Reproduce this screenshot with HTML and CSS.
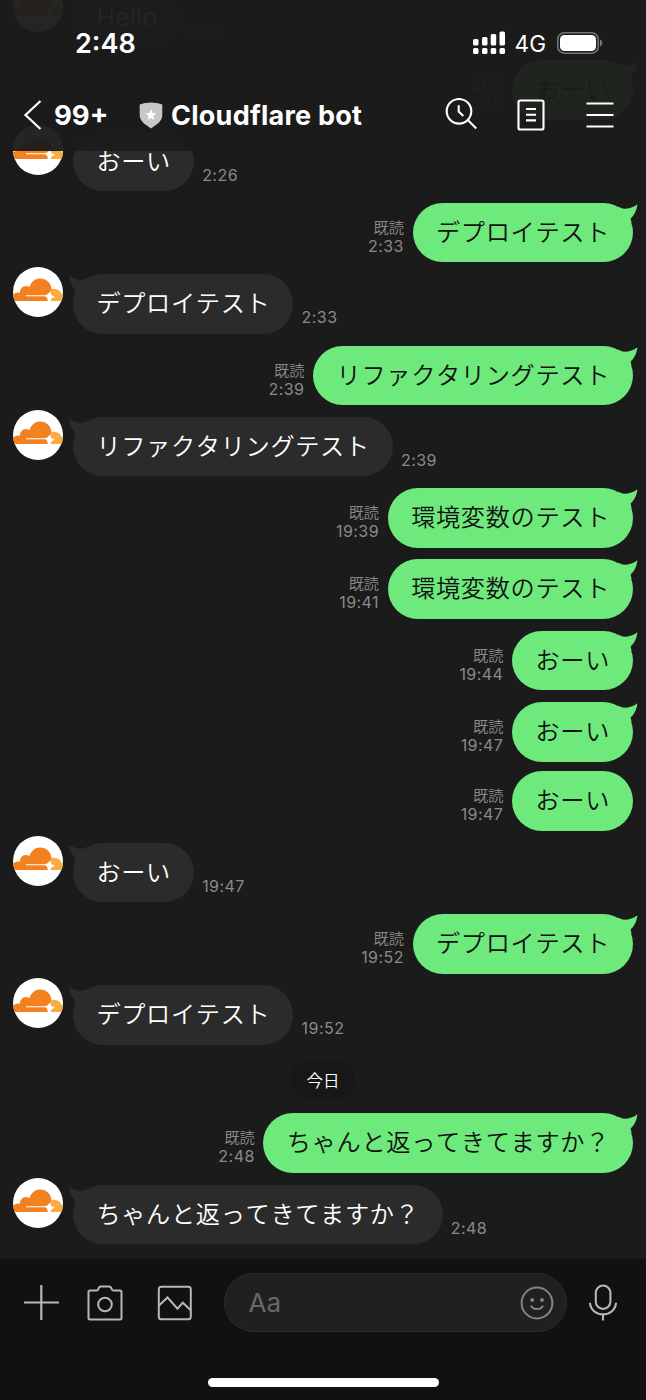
FILE: index.html
```html
<!DOCTYPE html>
<html lang="ja">
<head>
<meta charset="utf-8">
<title>Cloudflare bot</title>
<link rel="stylesheet" href="styles.css">
</head>
<body>
<svg class="defs" aria-hidden="true">
  <symbol id="logo" viewBox="0 0 50 50">
    <circle cx="25" cy="25" r="25" fill="#fff"/>
    <path d="M1.800 34C.5 31 0 28 .5 27.500C2 25.700 4.500 25.300 7 25.500C6.500 20.500 12 17 16.500 20C18.500 14.500 22 11.500 27 11.500C33.500 11.500 38 16 38.500 22L37 27L35 34Z" fill="#f48120"/>
    <path d="M38.500 22C44.500 21 48.500 24.500 49.200 28.500C50 29.500 49.500 32 48.500 34H35L37 27Z" fill="#faad3f"/>
    <path d="M13 28.200H32L35 27L37 24.500L38.500 28.200L42 29.800L38.500 31.500L37 35L35 34.300L34 30.500L32 29.300H13Z" fill="#fff"/>
  </symbol>
  <symbol id="tail" viewBox="0 0 20 20">
    <path d="M0 3.400C2 4.600 4.200 5.700 6.500 5.700C11 5.700 16 4 19.300 1.200C19 7 16 12.800 12.600 15.400L13.600 20L3 15Z" fill="currentColor"/>
  </symbol>
</svg>
<div class="phone">
  <main class="chat">
    <div class="row in"><svg class="avatar"><use href="#logo"/></svg><div class="bubble latin">Hello<svg class="tail"><use href="#tail"/></svg></div><time class="time">2:26</time></div>
    <div class="row out"><div class="meta"><span class="read">既読</span><time class="time">2:26</time></div><div class="bubble">おーい<svg class="tail"><use href="#tail"/></svg></div></div>
    <div class="row in"><svg class="avatar"><use href="#logo"/></svg><div class="bubble">おーい<svg class="tail"><use href="#tail"/></svg></div><time class="time">2:26</time></div>
    <div class="row out"><div class="meta"><span class="read">既読</span><time class="time">2:33</time></div><div class="bubble">デプロイテスト<svg class="tail"><use href="#tail"/></svg></div></div>
    <div class="row in"><svg class="avatar"><use href="#logo"/></svg><div class="bubble">デプロイテスト<svg class="tail"><use href="#tail"/></svg></div><time class="time">2:33</time></div>
    <div class="row out"><div class="meta"><span class="read">既読</span><time class="time">2:39</time></div><div class="bubble">リファクタリングテスト<svg class="tail"><use href="#tail"/></svg></div></div>
    <div class="row in"><svg class="avatar"><use href="#logo"/></svg><div class="bubble">リファクタリングテスト<svg class="tail"><use href="#tail"/></svg></div><time class="time">2:39</time></div>
    <div class="row out"><div class="meta"><span class="read">既読</span><time class="time">19:39</time></div><div class="bubble">環境変数のテスト<svg class="tail"><use href="#tail"/></svg></div></div>
    <div class="row out"><div class="meta"><span class="read">既読</span><time class="time">19:41</time></div><div class="bubble">環境変数のテスト<svg class="tail"><use href="#tail"/></svg></div></div>
    <div class="row out"><div class="meta"><span class="read">既読</span><time class="time">19:44</time></div><div class="bubble">おーい<svg class="tail"><use href="#tail"/></svg></div></div>
    <div class="row out"><div class="meta"><span class="read">既読</span><time class="time">19:47</time></div><div class="bubble">おーい<svg class="tail"><use href="#tail"/></svg></div></div>
    <div class="row out grouped"><div class="meta"><span class="read">既読</span><time class="time">19:47</time></div><div class="bubble">おーい</div></div>
    <div class="row in"><svg class="avatar"><use href="#logo"/></svg><div class="bubble">おーい<svg class="tail"><use href="#tail"/></svg></div><time class="time">19:47</time></div>
    <div class="row out"><div class="meta"><span class="read">既読</span><time class="time">19:52</time></div><div class="bubble">デプロイテスト<svg class="tail"><use href="#tail"/></svg></div></div>
    <div class="row in"><svg class="avatar"><use href="#logo"/></svg><div class="bubble">デプロイテスト<svg class="tail"><use href="#tail"/></svg></div><time class="time">19:52</time></div>
    <div class="date">今日</div>
    <div class="row out"><div class="meta"><span class="read">既読</span><time class="time">2:48</time></div><div class="bubble">ちゃんと返ってきてますか？<svg class="tail"><use href="#tail"/></svg></div></div>
    <div class="row in"><svg class="avatar"><use href="#logo"/></svg><div class="bubble">ちゃんと返ってきてますか？<svg class="tail"><use href="#tail"/></svg></div><time class="time">2:48</time></div>
  </main>

  <header class="header">
    <div class="status">
      <span class="clock">2:48</span>
      <svg class="signal" width="34" height="24" viewBox="0 0 34 24" fill="#fff">
        <rect x="1" y="8" width="5.500" height="6.500" rx="1.500"/><rect x="10" y="6" width="5.500" height="8.500" rx="1.500"/><rect x="18.700" y="3" width="5.500" height="11.500" rx="1.500"/><rect x="27.500" y=".5" width="5.500" height="14" rx="1.500"/>
        <rect x="1" y="17" width="5.500" height="6" rx="1.500"/><rect x="10" y="17" width="5.500" height="6" rx="1.500"/><rect x="18.700" y="17" width="5.500" height="6" rx="1.500"/><rect x="27.500" y="17" width="5.500" height="6" rx="1.500"/>
      </svg>
      <span class="network">4G</span>
      <svg class="battery" width="46" height="22" viewBox="0 0 46 22">
        <rect x=".8" y=".8" width="40.400" height="20.400" rx="6.500" fill="none" stroke="#777" stroke-width="1.600"/>
        <rect x="3" y="3" width="36" height="16" rx="4.500" fill="#fff"/>
        <path d="M43 7.500C46 8.500 46 13.500 43 14.500Z" fill="#777"/>
      </svg>
    </div>
    <nav class="nav">
      <svg class="back" width="20" height="32" viewBox="0 0 20 32" fill="none" stroke="#fff" stroke-width="2.200"><path d="M18.500 2L3.500 16L18.500 30"/></svg>
      <span class="unread">99+</span>
      <svg class="shield" width="24" height="27" viewBox="0 0 24 27"><path d="M12 .5C16 .5 20 1.200 23.300 2.500V13C23.300 19.500 17.500 22.500 12 26.500C6.500 22.500 .7 19.500 .7 13V2.500C4 1.200 8 .5 12 .5Z" fill="#c7c7c7"/><path d="M12 7L13.500 10.900L17.300 11.300L14.400 13.900L15.300 18L12 15.900L8.700 18L9.600 13.900L6.700 11.300L10.500 10.900Z" fill="#fff"/></svg>
      <h1 class="title">Cloudflare bot</h1>
      <div class="tools">
        <svg class="search" width="34" height="34" viewBox="0 0 34 34" fill="none" stroke="#fff" stroke-width="2.100"><circle cx="14" cy="13.300" r="12.300"/><path d="M23 22.300L31.300 30.500M13.700 7.300V13.500L18.300 17.900"/></svg>
        <svg class="notes" width="28" height="32" viewBox="0 0 28 32" fill="none" stroke="#fff" stroke-width="2.100"><rect x="1.500" y="1.500" width="25" height="29" rx="1.800"/><path d="M9 10H19M9 15.700H19M9 21.400H19"/></svg>
        <svg width="28" height="28" viewBox="0 0 28 28" stroke="#fff" stroke-width="2.200"><path d="M.5 2.500H27.500M.5 14H27.500M.5 25.500H27.500"/></svg>
      </div>
    </nav>
  </header>

  <footer class="footer">
    <div class="composer">
      <svg class="plus" width="36" height="36" viewBox="0 0 36 36" stroke="#b7b7b7" stroke-width="2.200"><path d="M1 17.500H36M18.300 0V35"/></svg>
      <svg class="camera" width="36" height="36" viewBox="0 0 36 36" fill="none" stroke="#b7b7b7" stroke-width="2"><path d="M3 5.500H9.500Q10.700 5.500 11.200 4.300L12 2.500Q12.500 1.500 13.500 1.500H22.500Q23.500 1.500 24 2.500L24.800 4.300Q25.300 5.500 26.500 5.500H33Q34.500 5.500 34.500 7V33Q34.500 34.500 33 34.500H3Q1.500 34.500 1.500 33V7Q1.500 5.500 3 5.500Z"/><circle cx="18" cy="19.500" r="6.800"/></svg>
      <svg class="photo" width="36" height="36" viewBox="0 0 36 36" fill="none" stroke="#b7b7b7" stroke-width="2"><rect x="1.800" y="1.800" width="32" height="32.500" rx="2.500"/><path d="M2 20.500L10.500 12.500L20.500 23.700L25.800 17.700L34 25.500"/></svg>
      <div class="field">
        <span class="placeholder">Aa</span>
        <svg width="34" height="34" viewBox="0 0 34 34" fill="none" stroke="#858585" stroke-width="2"><circle cx="17" cy="17" r="15.400"/><circle cx="12.200" cy="14" r="1.900" fill="#858585" stroke="none"/><circle cx="22" cy="14" r="1.900" fill="#858585" stroke="none"/><path d="M11 19.500C12.500 24.200 21.500 24.200 23 19.500"/></svg>
      </div>
      <svg class="mic" width="28" height="37" viewBox="0 0 28 37" fill="none" stroke="#b7b7b7" stroke-width="2.100"><rect x="6.800" y="1.500" width="14.600" height="23.500" rx="7.300"/><path d="M1 18.800C1.500 25.800 7 30.300 14 30.300S26.500 25.800 27 18.800M14 30.300V36.500"/></svg>
    </div>
    <div class="home"></div>
  </footer>
</div>
</body>
</html>
```
FILE: styles.css
```css
* { box-sizing: border-box; }
body {
  margin: 0;
  background: #1b1b1b;
  color: #fff;
  font-family: Inter, "Noto Sans CJK JP", sans-serif;
}
.defs { position: absolute; width: 0; height: 0; }
svg { display: block; flex: none; }
.phone {
  position: relative;
  width: 646px;
  height: 1400px;
  overflow: hidden;
  display: flex;
  flex-direction: column;
  background: #1b1b1b;
}

/* Messages */
.chat {
  flex: none;
  height: 1259px;
  padding: 0 13px 15px;
  display: flex;
  flex-direction: column;
  justify-content: flex-end;
  gap: 11.8px;
}
.row { display: flex; flex: none; height: 59.5px; }
.row.grouped { margin-top: -1.9px; }
.row.out { justify-content: flex-end; }
.avatar { width: 50px; height: 50px; margin: -7px 10px 0 0; }
.bubble {
  position: relative;
  padding: 0 23px 0 23.4px;
  border-radius: 30px;
  font: 350 24.2px/56px "Noto Sans CJK JP DemiLight", "Noto Sans CJK JP", sans-serif;
  letter-spacing: 0.67px;
  font-kerning: none;
  text-spacing-trim: space-all;
  white-space: nowrap;
}
.bubble.latin { font-family: Inter, sans-serif; font-size: 24.87px; letter-spacing: 0.4px; }
.in .bubble { background: #2b2b2b; color: #fff; }
.out .bubble { background: #6ee97c; color: #111; }
.tail {
  position: absolute;
  top: 0;
  width: 20px;
  height: 20px;
}
.out .tail { right: -4.7px; color: #6ee97c; }
.in .tail { left: -4.7px; color: #2b2b2b; transform: scaleX(-1); }
.time {
  font-size: 16px;
  line-height: 20px;
  letter-spacing: 0.45px;
  color: #8a8a8a;
}
.in .time { align-self: flex-end; margin: 0 0 6.4px 8.2px; }
.meta {
  display: flex;
  flex-direction: column;
  align-items: flex-end;
  padding-top: 13px;
  margin-right: 8.7px;
}
.read {
  font: 350 15.2px/20px "Noto Sans CJK JP DemiLight", "Noto Sans CJK JP", sans-serif;
  color: #8a8a8a;
}
.date {
  flex: none;
  align-self: center;
  width: 64px;
  height: 40px;
  margin: 3px 0 1.8px;
  border-radius: 20px;
  background: #171717;
  font: 350 16.5px/40px "Noto Sans CJK JP DemiLight", "Noto Sans CJK JP", sans-serif;
  text-align: center;
}

/* Translucent header over the scrolled messages */
.header {
  position: absolute;
  inset: 0 0 auto 0;
  height: 151px;
  background: rgba(27, 27, 27, 0.955);
}
.status {
  display: flex;
  align-items: center;
  height: 86px;
  padding: 0 43px 0 75px;
}
.clock { font-size: 27px; font-weight: 600; }
.signal { margin-left: auto; }
.network { margin: 0 11px 0 9px; font-size: 22.6px; }
.nav {
  display: flex;
  align-items: center;
  height: 58px;
  padding: 0 32px 0 22px;
}
.unread { margin-left: 12px; width: 85px; font-size: 27.5px; font-weight: 650; }
.title { margin: 0 0 0 8px; font-size: 27px; font-weight: 650; letter-spacing: 0.25px; white-space: nowrap; }
.tools { display: flex; align-items: center; margin-left: auto; }
.search { margin-right: 38px; }
.notes { margin-right: 41px; }

/* Composer */
.footer {
  flex: none;
  height: 141px;
  padding-top: 14px;
  background: #111;
}
.composer { display: flex; align-items: center; height: 59px; padding-left: 23px; }
.camera { margin-left: 28px; }
.photo { margin-left: 33.5px; }
.field {
  display: flex;
  align-items: center;
  justify-content: space-between;
  width: 343px;
  height: 59px;
  margin-left: 31px;
  padding: 0 12px 0 24px;
  border: 1px solid #2b2b2b;
  border-radius: 30px;
  background: #202020;
}
.placeholder { font-size: 26px; color: #686868; }
.mic { margin-left: 22px; }
.home { width: 231px; height: 9px; margin: 46px auto 0; border-radius: 5px; background: #fff; }
```
